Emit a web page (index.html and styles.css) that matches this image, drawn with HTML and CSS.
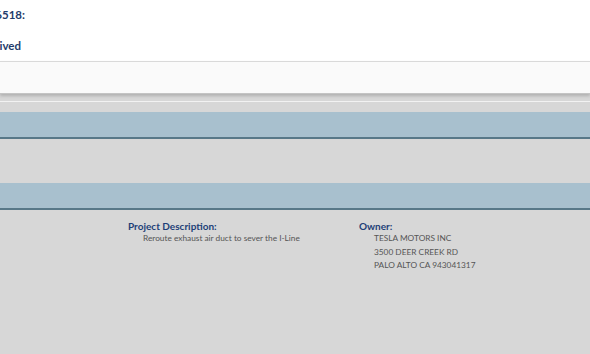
FILE: index.html
```html
<!DOCTYPE html>
<html>
	<head>
		<meta charset="UTF-8">
		<title>Permit Detail</title>
		<link rel="stylesheet" href="styles.css">
	</head>
	<body>
		<div class="head">
			<div class="head-line first"><span>Application BLD2015-06518:</span></div>
			<div class="head-line second"><span>Status: Received</span></div>
		</div>
		<div class="toolbar"></div>
		<div class="gap"></div>
		<div class="bar"></div>
		<div class="panel"></div>
		<div class="bar"></div>
		<div class="detail">
			<div class="col col-desc">
				<h4>Project Description:</h4>
				<p>Reroute exhaust air duct to sever the I-Line</p>
			</div>
			<div class="col col-owner">
				<h4>Owner:</h4>
				<p>TESLA MOTORS INC</p>
				<p>3500 DEER CREEK RD</p>
				<p>PALO ALTO CA 943041317</p>
			</div>
		</div>
	</body>
</html>
```

FILE: styles.css
```css
* {margin:0; padding:0;}
html, body {height:100%;}
body {background:#d7d7d7; font-family:Lato, "Open Sans", sans-serif; overflow:hidden;}

.head {background:#fff; height:61px; padding-top:7px; box-sizing:border-box;}
/* text runs off the left edge, so push it out from the right */
.head-line {display:flex; justify-content:flex-end; font-size:11.5px; font-weight:bold; color:#1f3c6b; line-height:15px; white-space:nowrap;}
.head-line.first {width:25px;}
.head-line.second {width:21px; margin-top:16px;}

.toolbar {height:31px; background:#fafafa; border-top:1px solid #d9d9d9; border-bottom:1px solid #c4c4c4; box-shadow:0 2px 3px rgba(0,0,0,0.18);}
.gap {height:6px; border-bottom:1px solid #f2f2f2; margin-top:1px; margin-bottom:10px;}

.bar {height:25px; background:#a8c0ce; border-bottom:2px solid #587888;}
.panel {height:44px;}

.detail {display:flex; padding-top:10px;}
.col h4 {font-size:10px; font-weight:bold; color:#1e3f78; line-height:12px;}
.col p {font-size:8.3px; color:#555; line-height:13.5px;}
.col-desc {margin-left:128px; width:231px;}
.col-desc p {padding-left:15px;}
.col-owner p {padding-left:15px;}
```
